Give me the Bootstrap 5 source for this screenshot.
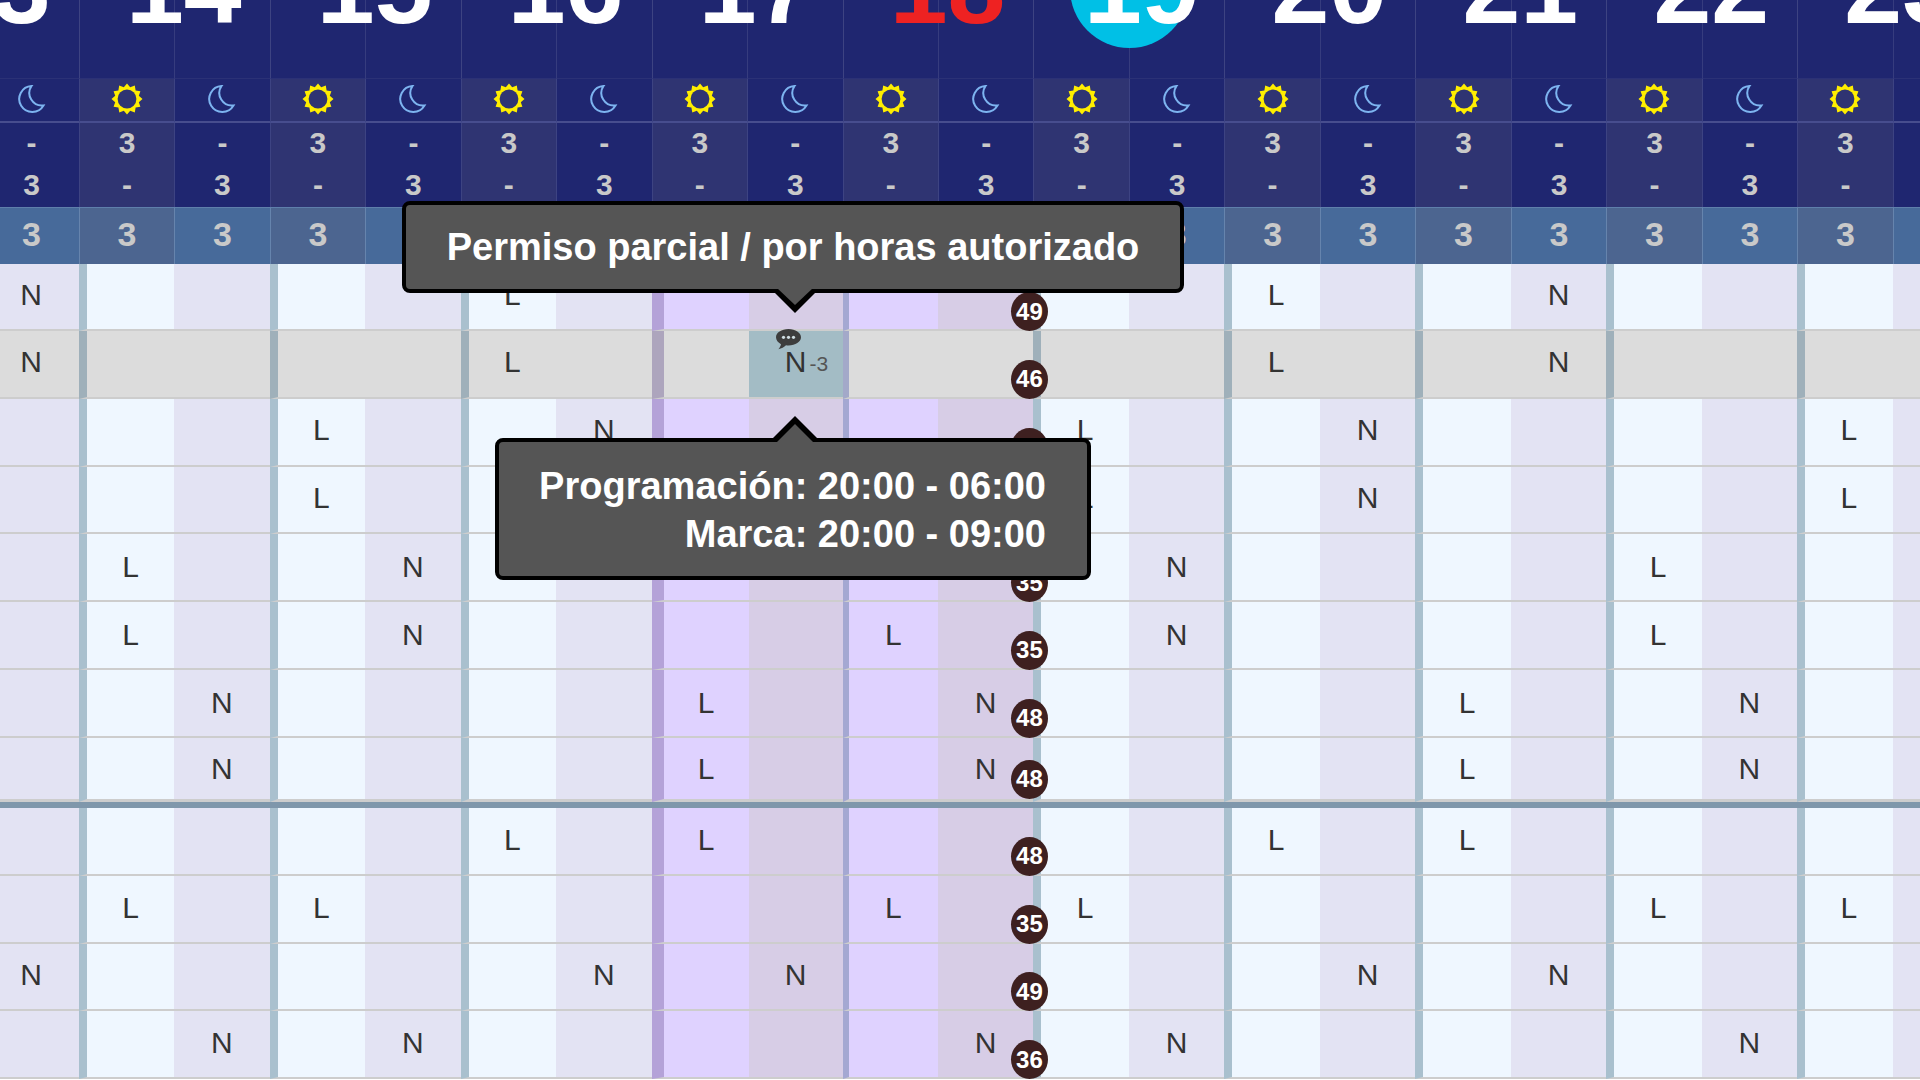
<!DOCTYPE html>
<html lang="es">
  <head>
    <meta charset="UTF-8" />
    <title>Programación de turnos</title>
    <link href="https://cdn.jsdelivr.net/npm/bootstrap@5.3.3/dist/css/bootstrap.min.css" rel="stylesheet" />
    <style>
      html, body { height: 100%; overflow: hidden; background: #fff; }
      body { font-family: "Liberation Sans", Arial, sans-serif; }
      .screen { width: 1920px; height: 1080px; }
      .sheet { width: 2100.34px; margin-left: -112.2px; }

      /* encabezado */
      .head-top { height: 78px; background: #1f2670; }
      .day-slot { width: 190.94px; flex: none; border-left: 1px solid #3d4382;
        background-image: linear-gradient(#363c7e, #363c7e); background-size: 1px 100%;
        background-position: center; background-repeat: no-repeat; }
      .day-num { display: block; font-size: 104px; line-height: 1; font-weight: 700; color: #fff;
        text-align: center; margin-top: -65px; padding-left: 18px; }
      .day-num.sunday { color: #ee2222; }
      .day-num.today { width: 119px; height: 119px; margin: -71px auto 0; padding-left: 14px;
        line-height: 116px; text-align: left; background: #00c0e6; border-radius: 50%; }

      .hcell { width: 95.47px; flex: none; background: #1f2670; border-left: 1px solid #3d4382; color: #c9c9c9; font-weight: 700; }
      .hcell.sun { background: #2f3472; }
      .row-icons .hcell { height: 45px; padding-bottom: 2px; border-top: 1px solid #2b3176; border-bottom: 2px solid #474d8e; }
      .row-num .hcell { height: 42px; padding-bottom: 2px; font-size: 30px; line-height: 1; }
      .row-blue .hcell { height: 57px; padding-bottom: 3px; background: #476a9a; border-top: 1px solid #5f7fab; border-left-color: #6684ad; font-size: 34px; }
      .row-blue .hcell.sun { background: #4c6590; }

      /* cuerpo */
      .gcell { width: 95.47px; height: 67.8px; flex: none; border-bottom: 2px solid #cdcdcd; background: #eff7ff;
        color: #333; font-size: 30px; line-height: 1; padding-bottom: 3px; }
      .gcell.night { background: #e3e3f3; }
      .gcell.hol { background: #dfd2ff; }
      .gcell.hol.night { background: #d7cde6; }
      .gcell.div-a { border-left: 8.5px solid #a9c0ce; }
      .gcell.div-b { border-left: 12px solid #b4a2d8; width: 97px; }
      .gcell.col-after { width: 93.94px; }
      .gcell.div-c { border-left: 6px solid #a4a8d2; }
      .row-first .gcell { height: 67px; }
      .row-low .gcell { padding-bottom: 1px; }
      .row-lower .gcell { padding-bottom: 0; }
      .row-grey .gcell, .row-grey .gcell.night, .row-grey .gcell.hol { background: #dcdcdc; }
      .row-grey .gcell.div-a { border-left-color: #9fb0ba; }
      .row-grey .gcell.div-b { border-left-color: #ada5bd; }
      .row-grey .gcell.div-c { border-left-color: #a3a9c9; }
      .row-grey .gcell.picked { background: #a3bcc5; }
      .row-last .gcell { height: 64.2px; border-bottom-width: 3px; padding: 2px 0 0; }
      .group-line { height: 6px; background: #7f97ab; }

      .total-pill { position: absolute; left: 73px; bottom: -2px; width: 37px; height: 39px; z-index: 2;
        border-radius: 50%; background: #3e2020; color: #fff; font-size: 24px; font-weight: 700; line-height: 1; }
      .row-last .total-pill { bottom: 0; }
      .diff-mark { position: absolute; left: 61px; top: 22px; font-size: 21px; color: #555; line-height: 1; }
      .chat-mark { position: absolute; left: 27px; top: -2px; width: 25px; height: 21px; }

      /* avisos */
      .hint-box { position: absolute; z-index: 5; background: #555; border: 4px solid #000; border-radius: 8px;
        color: #fff; font-size: 38px; font-weight: 700; }
      .hint-box::before, .hint-box::after { content: ""; position: absolute; width: 0; height: 0; border-style: solid; }
      .hint-top { left: 402px; top: 201px; width: 782px; height: 92px; line-height: 85px; text-align: center; }
      .hint-top::before { left: 365px; top: 84px; border-width: 24px 24px 0; border-color: #000 transparent transparent; }
      .hint-top::after { left: 371px; top: 83px; border-width: 17px 18px 0; border-color: #555 transparent transparent; }
      .hint-bottom { left: 495px; top: 438px; width: 596px; height: 142px; padding: 20px 41px 0 0; line-height: 48px; text-align: right; }
      .hint-bottom::before { left: 272px; top: -26px; border-width: 0 24px 24px; border-color: transparent transparent #000; }
      .hint-bottom::after { left: 278px; top: -18px; border-width: 0 18px 18px; border-color: transparent transparent #555; }
    </style>
  </head>
  <body>
    <div class="screen position-relative overflow-hidden">
      <div class="sheet" id="sheet"></div>

      <div class="hint-box hint-top">Permiso parcial / por horas autorizado</div>
      <div class="hint-box hint-bottom">Programación: 20:00 - 06:00<br />Marca: 20:00 - 09:00</div>
    </div>

    <script>
      const COLS = 22;
      const days = [13, 14, 15, 16, 17, 18, 19, 20, 21, 22, 23];

      // columna -1 queda fuera de pantalla; L / N por fila: columna + letra
      const rows = [
        { total: 49, marks: "0N 5L 13L 16N", cls: "row-first" },
        { total: 46, marks: "0N 5L 8N 13L 16N", cls: "row-grey" },
        { total: 35, marks: "3L 6N 11L 14N 19L" },
        { total: 35, marks: "3L 6N 11L 14N 19L" },
        { total: 35, marks: "1L 4N 9L 12N 17L", cls: "row-low" },
        { total: 35, marks: "1L 4N 9L 12N 17L", cls: "row-low" },
        { total: 48, marks: "2N 7L 10N 15L 18N", cls: "row-lower" },
        { total: 48, marks: "2N 7L 10N 15L 18N", cls: "row-last" },
        { total: 48, marks: "5L 7L 13L 15L", cls: "row-low" },
        { total: 35, marks: "1L 3L 9L 11L 17L 19L", cls: "row-low" },
        { total: 49, marks: "0N 6N 8N 14N 16N" },
        { total: 36, marks: "2N 4N 10N 12N 18N" }
      ];

      const starPoints = (() => {
        const pts = [];
        for (let i = 0; i < 24; i++) {
          const r = i % 2 ? 12.2 : 15.5;
          const a = (Math.PI * i) / 12 - Math.PI / 2;
          pts.push((16 + r * Math.cos(a)).toFixed(1) + "," + (16 + r * Math.sin(a)).toFixed(1));
        }
        return pts.join(" ");
      })();

      const sunIcon = `<svg width="32" height="32" viewBox="0 0 32 32"><polygon points="${starPoints}" fill="#ffee00"/><circle cx="16" cy="16" r="9.4" fill="#2f3472"/></svg>`;
      const moonIcon = `<svg width="30" height="30" viewBox="1 0 30 30"><path d="M15.500 2A13 13 0 1 0 27.500 21.500 A12.600 12.600 0 0 1 15.500 2Z" fill="none" stroke="#7db4f0" stroke-width="2"/></svg>`;
      const chatIcon = `<svg class="chat-mark" viewBox="0 0 25 21"><path d="M12.500 0C5.600 0 0 3.600 0 8.300c0 2.900 2 5.400 5 6.900-.4 1.900-1.500 3.600-2.600 5 3-.5 5.800-2 7.600-3.900.8.100 1.600.2 2.500.2 6.900 0 12.500-3.600 12.500-8.200S19.400 0 12.500 0z" fill="#3d3d3d"/><circle cx="7.500" cy="8.300" r="1.600" fill="#cfdde2"/><circle cx="12.500" cy="8.300" r="1.600" fill="#cfdde2"/><circle cx="17.500" cy="8.300" r="1.600" fill="#cfdde2"/></svg>`;

      function headerRow(cls, content) {
        let html = `<div class="d-flex ${cls}">`;
        for (let c = 0; c < COLS; c++) {
          const sun = c % 2 === 0;
          html += `<div class="hcell ${sun ? "sun" : ""} d-flex align-items-center justify-content-center">${content(c, sun)}</div>`;
        }
        return html + "</div>";
      }

      function dividerClass(c) {
        if ((c + 2) % 2 === 0) return c === 8 ? "col-after" : "";
        if (c === 7) return "div-b";
        if (c === 9) return "div-c";
        return "div-a";
      }

      let html = '<div class="head-top d-flex">';
      days.forEach((d) => {
        const cls = d === 18 ? "sunday" : d === 19 ? "today" : "";
        html += `<div class="day-slot"><span class="day-num ${cls}">${d}</span></div>`;
      });
      html += "</div>";

      html += headerRow("row-icons", (c, sun) => (sun ? sunIcon : moonIcon));
      html += headerRow("row-num", (c, sun) => (sun ? "3" : "-"));
      html += headerRow("row-num", (c, sun) => (sun ? "-" : "3"));
      html += headerRow("row-blue", () => "3");

      rows.forEach((row) => {
        const marks = {};
        row.marks.split(" ").forEach((m) => { marks[parseInt(m)] = m.slice(-1); });
        const isGrey = row.cls === "row-grey";
        html += `<div class="d-flex ${row.cls || ""}">`;
        for (let c = -1; c < COLS - 1; c++) {
          const night = (c + 2) % 2 === 0;
          const hol = c >= 7 && c <= 10;
          const picked = isGrey && c === 8;
          let inner = marks[c] || "";
          if (picked) inner += chatIcon + '<span class="diff-mark">-3</span>';
          if (c === 10) inner += `<span class="total-pill d-flex align-items-center justify-content-center">${row.total}</span>`;
          html += `<div class="gcell ${night ? "night" : ""} ${hol ? "hol" : ""} ${picked ? "picked" : ""} ${dividerClass(c)} position-relative d-flex align-items-center justify-content-center">${inner}</div>`;
        }
        html += "</div>";
        if (row.cls === "row-last") html += '<div class="group-line"></div>';
      });

      document.getElementById("sheet").innerHTML = html;
    </script>
    <script src="https://cdn.jsdelivr.net/npm/bootstrap@5.3.3/dist/js/bootstrap.bundle.min.js"></script>
  </body>
</html>
